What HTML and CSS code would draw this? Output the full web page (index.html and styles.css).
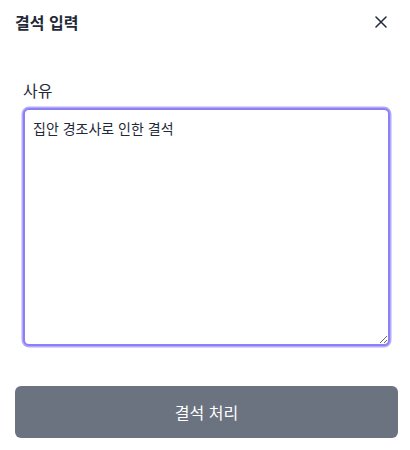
FILE: index.html
```html
<!DOCTYPE html>
<html lang="ko">
  <head>
    <meta charset="UTF-8" />
    <meta name="viewport" content="width=device-width, initial-scale=1.0" />
    <title>결석 입력</title>
    <link rel="stylesheet" href="styles.css">
  </head>
  <body>
    <div class="modal">
      <header class="modal-header">
        <h1>결석 입력</h1>
        <button class="close-btn" aria-label="닫기">
          <svg width="12" height="12" viewBox="0 0 12 12">
            <path d="M1 1 L11 11 M11 1 L1 11" stroke="#1f2937" stroke-width="1.5" stroke-linecap="round" fill="none" />
          </svg>
        </button>
      </header>

      <div class="modal-body">
        <label for="reason">사유</label>
        <textarea id="reason" class="reason-input">집안 경조사로 인한 결석</textarea>
      </div>

      <div class="modal-footer">
        <button class="submit-btn">결석 처리</button>
      </div>
    </div>
  </body>
</html>
```

FILE: styles.css
```css
* {
  margin: 0;
  padding: 0;
  box-sizing: border-box;
  font-family: "Noto Sans CJK KR", "Noto Sans", sans-serif;
}

body {
  background: white;
}

.modal {
  width: 410px;
  height: 450px;
  padding: 12px 12px 0 15px;
}

.modal-header {
  display: flex;
  justify-content: space-between;
  align-items: center;
  height: 20px;
}

.modal-header h1 {
  font-size: 16px;
  font-weight: 700;
  line-height: 20px;
  color: #1f2937;
}

.close-btn {
  background: none;
  border: none;
  width: 20px;
  height: 20px;
  display: flex;
  align-items: center;
  justify-content: center;
  margin-right: 7px;
  cursor: pointer;
}

.modal-body {
  padding: 46px 8px 0;
  display: flex;
  flex-direction: column;
}

.modal-body label {
  font-size: 16px;
  line-height: 24px;
  color: #1f2937;
  margin-bottom: 6px;
}

.reason-input {
  height: 238px;
  padding: 8px 8px;
  font-size: 14px;
  line-height: 20px;
  color: #1f2937;
  border: 2px solid #8b80f6;
  border-radius: 6px;
  box-shadow: 0 0 0 1.5px #b3abfa;
  outline: none;
  resize: vertical;
}

.modal-footer {
  margin-top: 40px;
}

.submit-btn {
  width: 100%;
  height: 52px;
  background: #6b7280;
  color: white;
  border: none;
  border-radius: 6px;
  font-size: 16px;
  cursor: pointer;
}
```
